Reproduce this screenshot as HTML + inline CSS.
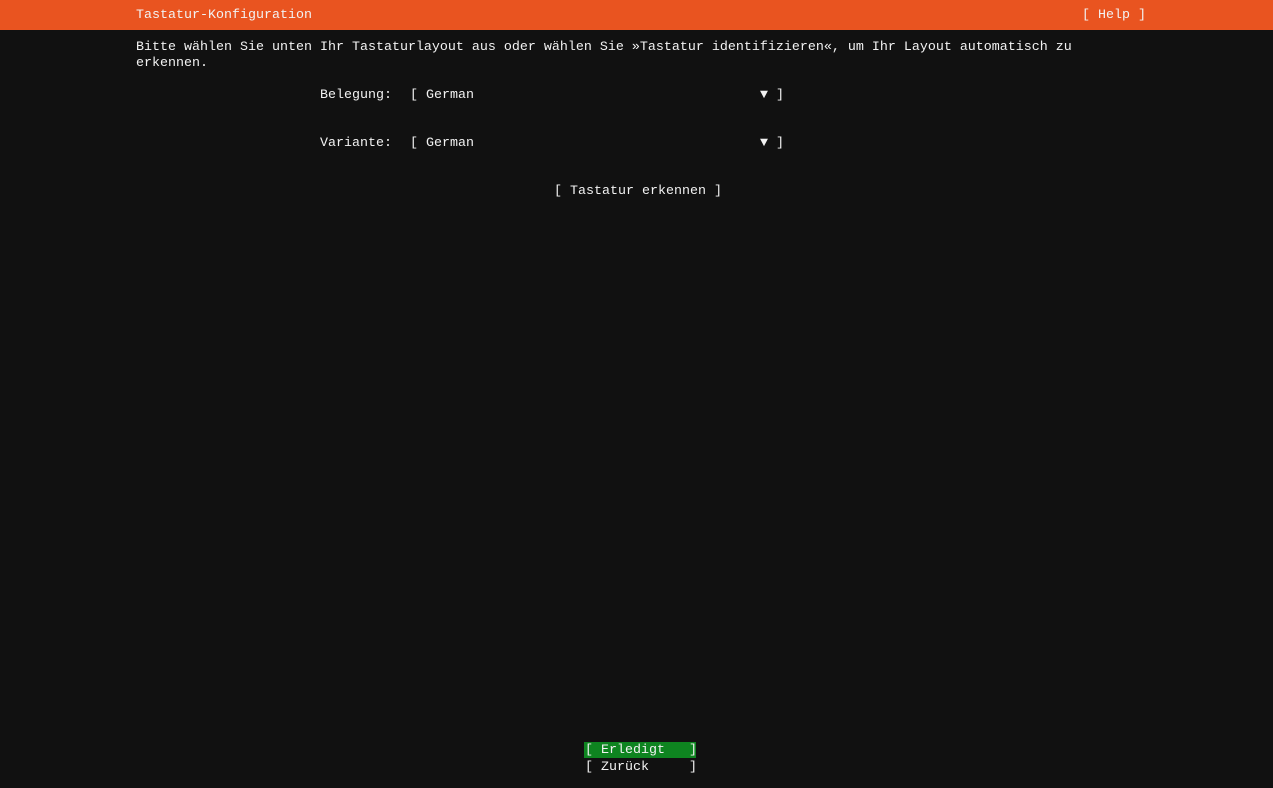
<!DOCTYPE html>
<html><head><meta charset="utf-8"><style>
body{margin:0;width:1273px;height:788px;background:#111111;overflow:hidden;position:relative;font-family:"Liberation Mono",monospace;font-size:13.33px;color:#f2f2f2}
.hdr{position:absolute;left:0;top:0;width:1273px;height:30px;background:#e95420}
.t{position:absolute;white-space:pre;line-height:16px;height:16px}
</style></head><body>
<div class="hdr"></div>
<div class="t" style="left:136px;top:8px">Tastatur-Konfiguration</div>
<div class="t" style="left:1082px;top:8px">[ Help ]</div>
<div class="t" style="left:136px;top:40px">Bitte wählen Sie unten Ihr Tastaturlayout aus oder wählen Sie »Tastatur identifizieren«, um Ihr Layout automatisch zu</div>
<div class="t" style="left:136px;top:56px">erkennen.</div>
<div class="t" style="left:320px;top:88px">Belegung:</div>
<div class="t" style="left:410px;top:88px">[ German</div>
<div class="t" style="left:760px;top:88px">▼ ]</div>
<div class="t" style="left:320px;top:136px">Variante:</div>
<div class="t" style="left:410px;top:136px">[ German</div>
<div class="t" style="left:760px;top:136px">▼ ]</div>
<div class="t" style="left:554px;top:184px">[ Tastatur erkennen ]</div>
<div style="position:absolute;left:584px;top:742px;width:112px;height:16px;background:#0e8420"></div>
<div class="t" style="left:585px;top:743px">[ Erledigt   ]</div>
<div class="t" style="left:585px;top:760px">[ Zurück     ]</div>
</body></html>
